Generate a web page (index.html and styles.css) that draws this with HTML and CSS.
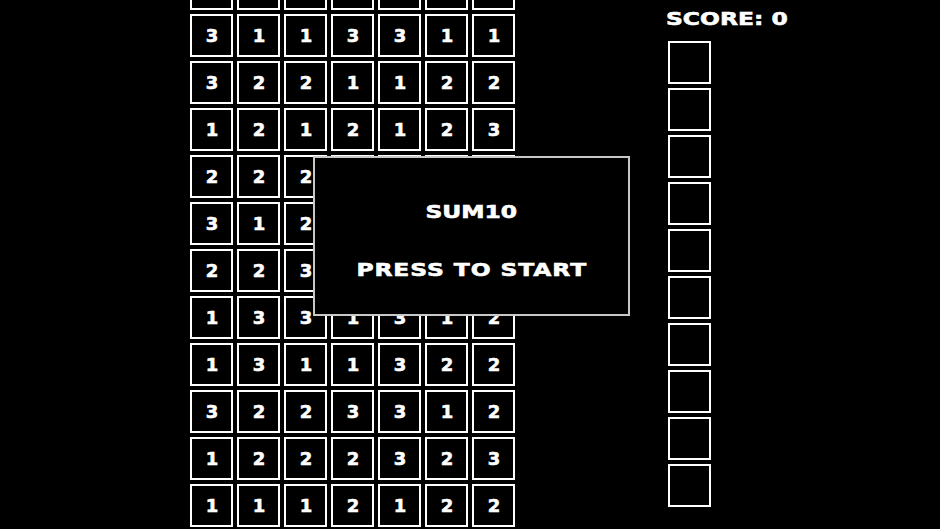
FILE: index.html
```html
<!DOCTYPE html>
<html>

<head>
	<title>Sum10</title>
	<link rel="stylesheet" href="styles.css">
</head>

<body>
	<div class="game">
		<div class="board">
			<div class="cell">2</div><div class="cell">1</div><div class="cell">3</div><div class="cell">2</div><div class="cell">1</div><div class="cell">1</div><div class="cell">3</div>
			<div class="cell">3</div><div class="cell">1</div><div class="cell">1</div><div class="cell">3</div><div class="cell">3</div><div class="cell">1</div><div class="cell">1</div>
			<div class="cell">3</div><div class="cell">2</div><div class="cell">2</div><div class="cell">1</div><div class="cell">1</div><div class="cell">2</div><div class="cell">2</div>
			<div class="cell">1</div><div class="cell">2</div><div class="cell">1</div><div class="cell">2</div><div class="cell">1</div><div class="cell">2</div><div class="cell">3</div>
			<div class="cell">2</div><div class="cell">2</div><div class="cell">2</div><div class="cell">1</div><div class="cell">3</div><div class="cell">2</div><div class="cell">1</div>
			<div class="cell">3</div><div class="cell">1</div><div class="cell">2</div><div class="cell">2</div><div class="cell">1</div><div class="cell">3</div><div class="cell">2</div>
			<div class="cell">2</div><div class="cell">2</div><div class="cell">3</div><div class="cell">1</div><div class="cell">2</div><div class="cell">1</div><div class="cell">3</div>
			<div class="cell">1</div><div class="cell">3</div><div class="cell">3</div><div class="cell">1</div><div class="cell">3</div><div class="cell">1</div><div class="cell">2</div>
			<div class="cell">1</div><div class="cell">3</div><div class="cell">1</div><div class="cell">1</div><div class="cell">3</div><div class="cell">2</div><div class="cell">2</div>
			<div class="cell">3</div><div class="cell">2</div><div class="cell">2</div><div class="cell">3</div><div class="cell">3</div><div class="cell">1</div><div class="cell">2</div>
			<div class="cell">1</div><div class="cell">2</div><div class="cell">2</div><div class="cell">2</div><div class="cell">3</div><div class="cell">2</div><div class="cell">3</div>
			<div class="cell">1</div><div class="cell">1</div><div class="cell">1</div><div class="cell">2</div><div class="cell">1</div><div class="cell">2</div><div class="cell">2</div>

			<div class="start-screen">
				<div class="title">SUM10</div>
				<div class="prompt">PRESS TO START</div>
			</div>
		</div>

		<div class="side">
			<div class="score">SCORE: 0</div>
			<div class="queue">
				<div class="slot"></div>
				<div class="slot"></div>
				<div class="slot"></div>
				<div class="slot"></div>
				<div class="slot"></div>
				<div class="slot"></div>
				<div class="slot"></div>
				<div class="slot"></div>
				<div class="slot"></div>
				<div class="slot"></div>
			</div>
		</div>
	</div>
</body>

</html>
```

FILE: styles.css
```css
html,
body {
	margin: 0;
	height: 100%;
	overflow: hidden;
	background-color: #000;
	color: #fff;
	font-family: "DejaVu Sans", "Liberation Sans", sans-serif;
	font-weight: bold;
	font-size: 18px;
	-webkit-text-stroke: 0.6px #fff;
}

.game {
	display: flex;
	align-items: flex-start;
	gap: 152px;
	padding-left: 190px;
}

.board {
	position: relative;
	margin-top: -33px;
	display: grid;
	grid-template-columns: repeat(7, 43px);
	grid-auto-rows: 43px;
	gap: 4px;
}

.cell {
	box-sizing: border-box;
	border: 2px solid #fff;
	display: grid;
	place-items: center;
	line-height: 18px;
	padding-top: 1px;
	padding-left: 1px;
}

/* title card over the board */
.start-screen {
	position: absolute;
	left: 123px;
	top: 189px;
	box-sizing: border-box;
	width: 317px;
	height: 160px;
	border: 2px solid #c8c8c8;
	background-color: #000;
	display: flex;
	flex-direction: column;
	align-items: center;
	padding-top: 44px;
	gap: 38px;
	line-height: 20px;
}

/* blocky wide lettering */
.title,
.prompt,
.score {
	transform: scaleX(1.3);
}

.prompt {
	letter-spacing: 0.7px;
}

.side {
	padding-top: 9px;
}

.score {
	line-height: 20px;
	margin-bottom: 12px;
	transform-origin: left center;
	margin-left: -1px;
}

.queue {
	display: flex;
	flex-direction: column;
	gap: 4px;
	padding-left: 1px;
}

.slot {
	box-sizing: border-box;
	width: 43px;
	height: 43px;
	border: 2px solid #fff;
}
```
